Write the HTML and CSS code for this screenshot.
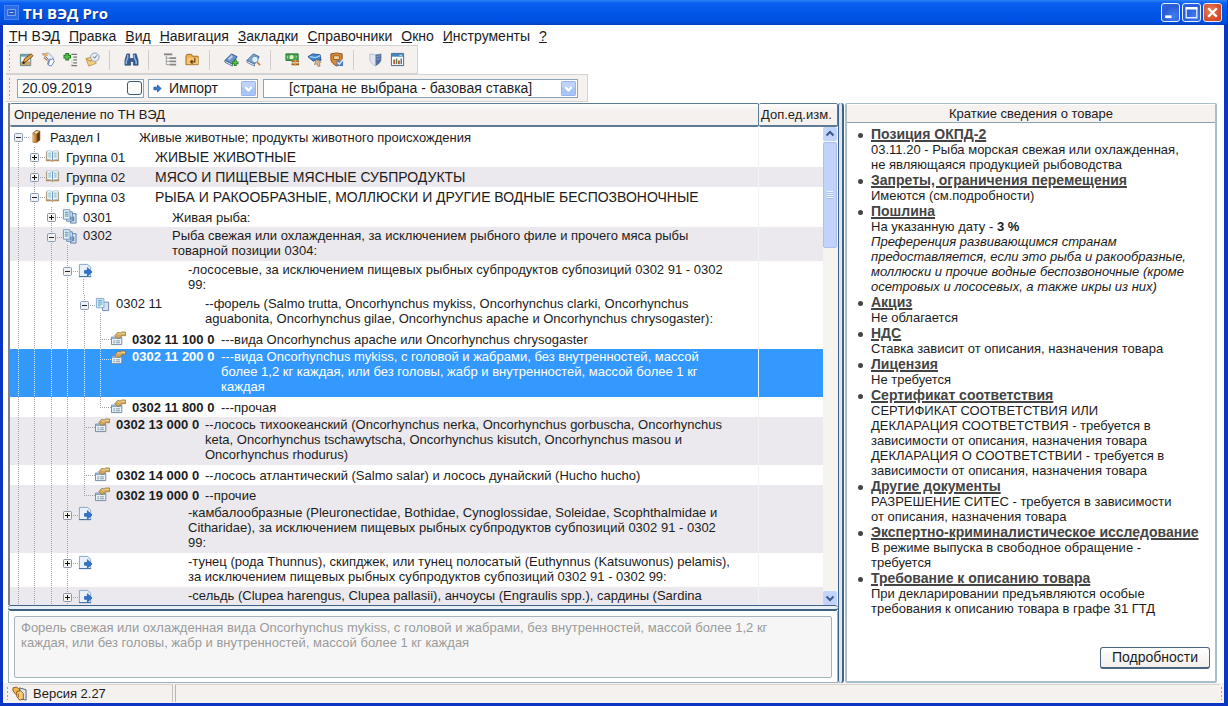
FILE: index.html
```html
<!DOCTYPE html>
<html lang="ru">
<head>
<meta charset="utf-8">
<title>ТН ВЭД Pro</title>
<link rel="stylesheet" href="styles.css">
</head>
<body>
<svg class="sprite" aria-hidden="true">
  <symbol id="plus" viewBox="0 0 9 9"><rect x=".5" y=".5" width="8" height="8" rx="1" fill="#f4f4f2" stroke="#8a94a4"/><path d="M2 4.500h5M4.500 2v5" stroke="#111"/></symbol>
  <symbol id="minus" viewBox="0 0 9 9"><rect x=".5" y=".5" width="8" height="8" rx="1" fill="#f0f0f0" stroke="#8a9bb4"/><path d="M2 4.500h5" stroke="#223"/></symbol>
  <symbol id="book" viewBox="0 0 16 16"><path d="M4 4l4-3 4 1v10l-4 3-4-1z" fill="#8a4f18"/><path d="M4 4l4 1v10l-4-1z" fill="#c98a3a"/><path d="M5 4l3-2 3 .6L8 5z" fill="#f3dfb4"/><path d="M9 5l2-1.500v8L9 13z" fill="#5e3410"/><path d="M5 6v7" stroke="#edc27c"/></symbol>
  <symbol id="open" viewBox="0 0 16 16"><path d="M1 3h14v10H9l-1 1-1-1H1z" fill="#b98a55"/><path d="M2 2c2-.6 4-.4 6 .8 2-1.200 4-1.400 6-.8v9.500c-2-.5-4-.3-6 .8-2-1.100-4-1.300-6-.8z" fill="#eef6fb" stroke="#8fb0c4" stroke-width=".6"/><path d="M8 3v9" stroke="#688ea8"/><path d="M3.500 4.500h3M3.500 6.500h3M3.500 8.500h3M9.500 4.500h3M9.500 6.500h3M9.500 8.500h3" stroke="#74b3cc"/></symbol>
  <symbol id="docs" viewBox="0 0 16 16"><path d="M9 5h6v10H9z" fill="#dbe6f6" stroke="#5577a8"/><path d="M5 3h6v10H5z" fill="#dce9f8" stroke="#5a7eae"/><path d="M1.500.8h7v10h-7z" fill="#eaf3fb" stroke="#6f93ba"/><path d="M3 3.500h4M3 5.500h4M3 7.500h4" stroke="#3d8fb0"/><path d="M12.500 8v5M9.500 8v4" stroke="#3a5d95"/></symbol>
  <symbol id="two" viewBox="0 0 16 16"><path d="M8 5.500h6.500v9H8z" fill="#d8e2f4" stroke="#6d84b4"/><path d="M1.500 1.500h8v10h-8z" fill="#e8f3fb" stroke="#86a5c5"/><path d="M3 3.500h5M3 5.500h5M3 7.500h5M3 9.500h3" stroke="#3e9cc4"/></symbol>
  <symbol id="link" viewBox="0 0 16 16"><path d="M1.500 1.500h9l3 3v10h-12z" fill="#e9f2fb" stroke="#7fa4c8"/><path d="M10.500 1.500v3h3z" fill="#bdd3ea"/><path d="M7 8h3V5l5 4.500L10 14v-3H7z" fill="#2d76cf" stroke="#1b4f9e" stroke-width=".7"/><path d="M1 14.500h13" stroke="#3f6ca3"/></symbol>
  <symbol id="card" viewBox="0 0 16 16"><path d="M.5 6.500h11v8H.5z" fill="#edf2f7" stroke="#70879c"/><path d="M1 7h10v1.500H1z" fill="#86a6c8"/><path d="M2.500 10.500h2M5.500 10.500h4M2.500 12.500h2M5.500 12.500h4" stroke="#7890a8"/><path d="M4 5l3-3.500 3 .5 1-1h4.500v4h-4L10 7 7.500 8 6 7z" fill="#d2a95c" stroke="#8a6930" stroke-width=".7"/><path d="M7 3l3 .5 1-1h4" stroke="#f1dca2" fill="none"/></symbol>
  <symbol id="chev" viewBox="0 0 16 16"><rect x=".5" y=".5" width="15" height="15" rx="1" fill="#a9c5f5" stroke="#8fb0e8"/><path d="M1 1h14v6H1z" fill="#bdd3fa"/><path d="M4.500 6.500L8 10l3.500-3.500" fill="none" stroke="#fff" stroke-width="2.400"/></symbol>
</svg>

<div class="window">
  <header class="title">
    <svg class="appicon" viewBox="0 0 16 16"><rect x=".5" y=".5" width="15" height="15" fill="#2b6ce8" stroke="#4d86ee"/><rect x="4" y="5" width="8" height="6" fill="#1b50c4" stroke="#8db4f7"/><path d="M6 8h4" stroke="#cfe0ff"/></svg>
    <h1>ТН ВЭД Pro</h1>
    <button class="win" aria-label="Свернуть"><svg viewBox="0 0 16 16"><path d="M3 12h6" stroke="#fff" stroke-width="2.600"/></svg></button>
    <button class="win" aria-label="Развернуть"><svg viewBox="0 0 16 16"><path d="M3 4h10v9H3z" fill="none" stroke="#dbe8ff" stroke-width="1.300"/><path d="M2.500 4h11" stroke="#fff" stroke-width="2.400"/></svg></button>
    <button class="win close" aria-label="Закрыть"><svg viewBox="0 0 16 16"><path d="M4 4l8 8M12 4l-8 8" stroke="#fff" stroke-width="2.200"/></svg></button>
  </header>

  <nav class="menu">
    <button><u>Т</u>Н ВЭД</button><button><u>П</u>равка</button><button><u>В</u>ид</button><button><u>Н</u>авигация</button><button><u>З</u>акладки</button><button><u>С</u>правочники</button><button><u>О</u>кно</button><button><u>И</u>нструменты</button><button><u>?</u></button>
  </nav>

  <div class="bar tools">
    <i class="grip"></i>
    <button aria-label="Изменить"><svg viewBox="0 0 16 16"><path d="M1.500 2.500h11v12h-11z" fill="#e9f4f4" stroke="#56808c"/><path d="M2 3h10v2H2z" fill="#69a5a8"/><path d="M2 10h10v4H2z" fill="#d0a367"/><path d="M4 12L6 7l7-5 2 2-7 6z" fill="#e6a640" stroke="#71441b"/><path d="M4 12l2-1" stroke="#222" stroke-width="2"/></svg></button>
    <button aria-label="Связи"><svg viewBox="0 0 16 16"><path d="M1 2l7-1 5 5-3 8-3-1 1-5z" fill="#e9eef8" stroke="#8ca1c5"/><path d="M3 3l5 5M10 7l-3 6" stroke="#58759f"/><path d="M2 2l4-1 2 3-4 1z" fill="#e9b263"/><path d="M9 9l4-2 1 3-3 5-3-1z" fill="#fff" stroke="#6987b6"/><path d="M3 6l4 3" stroke="#cf8450" stroke-width="1.500"/></svg></button>
    <button aria-label="Добавить"><svg viewBox="0 0 16 16"><path d="M4.500 1v8M.5 5h8" stroke="#1d7922" stroke-width="4"/><path d="M4.500 2v6M1.500 5h6" stroke="#58bd4c" stroke-width="2"/><path d="M9 2.500h6M11 5.500h4M11 8.500h4M11 11.500h4M9 14.500h6" stroke="#777" stroke-width="1.300"/><path d="M9.500 9v5" stroke="#aaa" stroke-dasharray="1 1"/></svg></button>
    <button aria-label="История"><svg viewBox="0 0 16 16"><path d="M1 7l7-2 4 7-8 3z" fill="#f0ce82" stroke="#c69a4d"/><path d="M1 7l5 3 3-4" fill="none" stroke="#b7893e"/><circle cx="10.500" cy="5.500" r="4.500" fill="#e7edf4" stroke="#8e9db2"/><path d="M8.500 5l2 1.500 2-3" fill="none" stroke="#57708d"/></svg></button>
    <i class="sep"></i>
    <button class="far" aria-label="Найти"><svg viewBox="0 0 16 16"><path d="M3 2h3v4l1 1h2l1-1V2h3l2 7v5h-5v-4H7v4H1V9z" fill="#375c8f" stroke="#243f69" stroke-width=".7"/><path d="M4 3v3L2.500 10v3M11 3v3l2 4v3" stroke="#8fb7e6" stroke-width="1.500" fill="none"/></svg></button>
    <i class="sep"></i>
    <button class="far" aria-label="Дерево"><svg viewBox="0 0 16 16"><path d="M1 2.500h9" stroke="#888" stroke-width="2"/><path d="M3.500 4v9.500H7M3.500 6.500H7M3.500 10H7" fill="none" stroke="#999"/><path d="M7 6.500h7M7 10h7M7 13.500h7" stroke="#888" stroke-width="2"/></svg></button>
    <button aria-label="Папка"><svg viewBox="0 0 16 16"><path d="M1 4.500l1-2h5l1 2h6v9H1z" fill="#e8ae50" stroke="#a36a25"/><path d="M2 6h12v7H2z" fill="#f3c673"/><path d="M10.500 6v4.500H6M8 8.500l-2 2 2 2" fill="none" stroke="#704018" stroke-width="1.300"/></svg></button>
    <i class="sep"></i>
    <button class="far" aria-label="Добавить закладку"><svg viewBox="0 0 16 16"><path d="M1 9l7-7 6 3-5 8z" fill="#6a90cc" stroke="#395984"/><path d="M1 9l8 4v2l-8-4z" fill="#e6edf5" stroke="#395984" stroke-width=".8"/><path d="M5 8l4-4" stroke="#b8d0f0" stroke-width="2"/><path d="M12 8v7M8.500 11.500h7" stroke="#258325" stroke-width="3"/><path d="M12 9v5M9.500 11.500h5" stroke="#76cc62"/></svg></button>
    <button aria-label="Найти закладку"><svg viewBox="0 0 16 16"><path d="M1 9l7-7 6 3-5 8z" fill="#7aa2d8" stroke="#47698f"/><path d="M1 9l8 4v2l-8-4z" fill="#eef3f8" stroke="#47698f" stroke-width=".8"/><circle cx="9.500" cy="8" r="3.500" fill="#dcefff" stroke="#658ab0"/><path d="M12 11l3 3" stroke="#c88434" stroke-width="2"/></svg></button>
    <i class="sep"></i>
    <button class="far" aria-label="Платежи"><svg viewBox="0 0 16 16"><path d="M1 2h13v7H1z" fill="#49a354" stroke="#20732d"/><circle cx="7" cy="5.500" r="2.200" fill="#dff4cc"/><path d="M2.500 4v3M12 4v2" stroke="#b9e6ad"/><path d="M7 10h8M7 13h8" stroke="#96531b" stroke-width="2"/><path d="M8 9.500h6M8 12.500h6M11 8v7" stroke="#e4aa48"/></svg></button>
    <button aria-label="Особенности"><svg viewBox="0 0 16 16"><path d="M1 5l5-3 8 1 1 6-5-1-3 2z" fill="#3f82cc" stroke="#255891"/><path d="M3 5l6 1 5-2" stroke="#9bd0fa" stroke-width="1.500" fill="none"/><path d="M10 8l5 3-2 1 1 3-2 .5-2-3-2 1z" fill="#d9b692" stroke="#8c7063" stroke-width=".7"/></svg></button>
    <button aria-label="Сертификаты"><svg viewBox="0 0 16 16"><path d="M2 2l6-1 6 1v6c0 3-3 5-6 7-3-2-6-4-6-7z" fill="#d78937" stroke="#8d4b17"/><path d="M5 4h6v4H5z" fill="#f5d798" stroke="#9d5c26"/><path d="M8 9h7v6H8z" fill="#527db5"/><path d="M9 11l2 2 4-5" stroke="#d6edff" stroke-width="1.500" fill="none"/></svg></button>
    <i class="sep"></i>
    <button class="far" aria-label="Защита"><svg viewBox="0 0 16 16"><path d="M2 2l6 1 6-1v6c0 3-3 5-6 7-3-2-6-4-6-7z" fill="#dfe6f2" stroke="#aab4c4" stroke-width=".8"/><path d="M8 3l6-1v6c0 3-3 5-6 7z" fill="#53709e"/><path d="M9 5l4-1M9 8l4-1" stroke="#8ea6c8"/></svg></button>
    <button aria-label="Отчёт"><svg viewBox="0 0 16 16"><path d="M1.500 1.500h13v13h-13z" fill="#fff" stroke="#3c638d"/><path d="M2 2h12v3H2z" fill="#4684bd"/><path d="M10 3.500h3" stroke="#d4ecff"/><path d="M4.500 13V8M9.500 13V9" stroke="#bf562e" stroke-width="2"/><path d="M7 13V7" stroke="#3c8b57" stroke-width="1.500"/><path d="M12 13V7" stroke="#426fb0" stroke-width="1.500"/></svg></button>
  </div>

  <div class="bar filters">
    <i class="grip"></i>
    <div class="field date"><input type="text" value="20.09.2019" aria-label="Дата"><input type="checkbox" aria-label="Использовать дату"></div>
    <div class="field mode">
      <svg class="arrow" viewBox="0 0 10 10"><path d="M1 3.500h4V1l4 4-4 4V6.500H1z" fill="#3579cf" stroke="#174b94" stroke-width=".8"/></svg>
      <select aria-label="Режим"><option>Импорт</option></select><svg class="drop"><use href="#chev"/></svg>
    </div>
    <div class="field country"><select aria-label="Страна"><option>[страна не выбрана - базовая ставка]</option></select><svg class="drop"><use href="#chev"/></svg></div>
  </div>

  <main class="work">
    <div class="left">
      <div class="treebox">
        <table class="tree">
          <thead><tr><th>Определение по ТН ВЭД</th><th class="unit">Доп.ед.изм.</th></tr></thead>
          <tbody>
            <tr><td><div class="row"><span class="node first"><svg><use href="#minus"/></svg></span><span class="pic"><svg><use href="#book"/></svg></span><span class="code">Раздел I</span><span>Живые животные; продукты животного происхождения</span></div></td><td></td></tr>
            <tr><td><div class="row"><i></i><span class="node"><svg><use href="#plus"/></svg></span><span class="pic"><svg><use href="#open"/></svg></span><span class="code">Группа 01</span><span class="caps">ЖИВЫЕ ЖИВОТНЫЕ</span></div></td><td></td></tr>
            <tr class="alt"><td><div class="row"><i></i><span class="node"><svg><use href="#plus"/></svg></span><span class="pic"><svg><use href="#open"/></svg></span><span class="code">Группа 02</span><span class="caps">МЯСО И ПИЩЕВЫЕ МЯСНЫЕ СУБПРОДУКТЫ</span></div></td><td></td></tr>
            <tr><td><div class="row"><i></i><span class="node"><svg><use href="#minus"/></svg></span><span class="pic"><svg><use href="#open"/></svg></span><span class="code">Группа 03</span><span class="caps">РЫБА И РАКООБРАЗНЫЕ, МОЛЛЮСКИ И ДРУГИЕ ВОДНЫЕ БЕСПОЗВОНОЧНЫЕ</span></div></td><td></td></tr>
            <tr><td><div class="row"><i></i><i></i><span class="node"><svg><use href="#plus"/></svg></span><span class="pic"><svg><use href="#docs"/></svg></span><span class="code">0301</span><span>Живая рыба:</span></div></td><td></td></tr>
            <tr class="alt"><td><div class="row two"><i></i><i></i><span class="node"><svg><use href="#minus"/></svg></span><span class="pic stem"><svg><use href="#docs"/></svg></span><span class="code">0302</span><span>Рыба свежая или охлажденная, за исключением рыбного филе и прочего мяса рыбы<br>товарной позиции 0304:</span></div></td><td></td></tr>
            <tr><td><div class="row two"><i></i><i></i><i></i><span class="node"><svg><use href="#minus"/></svg></span><span class="pic stem"><svg><use href="#link"/></svg></span><span class="code"></span><span>-лососевые, за исключением пищевых рыбных субпродуктов субпозиций 0302 91 - 0302<br>99:</span></div></td><td></td></tr>
            <tr><td><div class="row two"><i></i><i></i><i></i><i></i><span class="node"><svg><use href="#minus"/></svg></span><span class="pic stem"><svg><use href="#two"/></svg></span><span class="code">0302 11</span><span>--форель (Salmo trutta, Oncorhynchus mykiss, Oncorhynchus clarki, Oncorhynchus<br>aguabonita, Oncorhynchus gilae, Oncorhynchus apache и Oncorhynchus chrysogaster):</span></div></td><td></td></tr>
            <tr><td><div class="row"><i></i><i></i><i></i><i></i><i></i><span class="node"></span><span class="pic"><svg><use href="#card"/></svg></span><b class="code">0302 11 100 0</b><span>---вида Oncorhynchus apache или Oncorhynchus chrysogaster</span></div></td><td></td></tr>
            <tr class="sel"><td><div class="row three"><i></i><i></i><i></i><i></i><i></i><span class="node"></span><span class="pic"><svg><use href="#card"/></svg></span><b class="code">0302 11 200 0</b><span>---вида Oncorhynchus mykiss, с головой и жабрами, без внутренностей, массой<br>более 1,2 кг каждая, или без головы, жабр и внутренностей, массой более 1 кг<br>каждая</span></div></td><td></td></tr>
            <tr><td><div class="row"><i></i><i></i><i></i><i></i><i></i><span class="node last"></span><span class="pic"><svg><use href="#card"/></svg></span><b class="code">0302 11 800 0</b><span>---прочая</span></div></td><td></td></tr>
            <tr class="alt"><td><div class="row three"><i></i><i></i><i></i><i></i><span class="node"></span><span class="pic"><svg><use href="#card"/></svg></span><b class="code">0302 13 000 0</b><span>--лосось тихоокеанский (Oncorhynchus nerka, Oncorhynchus gorbuscha, Oncorhynchus<br>keta, Oncorhynchus tschawytscha, Oncorhynchus kisutch, Oncorhynchus masou и<br>Oncorhynchus rhodurus)</span></div></td><td></td></tr>
            <tr><td><div class="row"><i></i><i></i><i></i><i></i><span class="node"></span><span class="pic"><svg><use href="#card"/></svg></span><b class="code">0302 14 000 0</b><span>--лосось атлантический (Salmo salar) и лосось дунайский (Hucho hucho)</span></div></td><td></td></tr>
            <tr class="alt"><td><div class="row"><i></i><i></i><i></i><i></i><span class="node last"></span><span class="pic"><svg><use href="#card"/></svg></span><b class="code">0302 19 000 0</b><span>--прочие</span></div></td><td></td></tr>
            <tr class="alt"><td><div class="row three"><i></i><i></i><i></i><span class="node"><svg><use href="#plus"/></svg></span><span class="pic"><svg><use href="#link"/></svg></span><span class="code"></span><span>-камбалообразные (Pleuronectidae, Bothidae, Cynoglossidae, Soleidae, Scophthalmidae и<br>Citharidae), за исключением пищевых рыбных субпродуктов субпозиций 0302 91 - 0302<br>99:</span></div></td><td></td></tr>
            <tr><td><div class="row two"><i></i><i></i><i></i><span class="node"><svg><use href="#plus"/></svg></span><span class="pic"><svg><use href="#link"/></svg></span><span class="code"></span><span>-тунец (рода Thunnus), скипджек, или тунец полосатый (Euthynnus (Katsuwonus) pelamis),<br>за исключением пищевых рыбных субпродуктов субпозиций 0302 91 - 0302 99:</span></div></td><td></td></tr>
            <tr class="alt"><td><div class="row two"><i></i><i></i><i></i><span class="node"><svg><use href="#plus"/></svg></span><span class="pic"><svg><use href="#link"/></svg></span><span class="code"></span><span>-сельдь (Clupea harengus, Clupea pallasii), анчоусы (Engraulis spp.), сардины (Sardina</span></div></td><td></td></tr>
          </tbody>
        </table>
        <div class="scroll">
          <button aria-label="Вверх"><svg viewBox="0 0 14 14"><path d="M3.500 8.500L7 5l3.500 3.500" fill="none" stroke="#3c5a8c" stroke-width="2"/></svg></button>
          <div class="thumb"></div>
          <button class="down" aria-label="Вниз"><svg viewBox="0 0 14 14"><path d="M3.500 5.500L7 9l3.500-3.500" fill="none" stroke="#3c5a8c" stroke-width="2"/></svg></button>
        </div>
      </div>
      <div class="hsplit"></div>
      <div class="note"><textarea readonly aria-label="Описание">Форель свежая или охлажденная вида Oncorhynchus mykiss, с головой и жабрами, без внутренностей, массой более 1,2 кг каждая, или без головы, жабр и внутренностей, массой более 1 кг каждая</textarea></div>
    </div>
    <div class="vsplit"></div>
    <aside class="info">
      <h2>Краткие сведения о товаре</h2>
      <ul>
        <li><a href="#">Позиция ОКПД-2</a><p>03.11.20 - Рыба морская свежая или охлажденная,<br>не являющаяся продукцией рыбоводства</p></li>
        <li><a href="#">Запреты, ограничения перемещения</a><p>Имеются (см.подробности)</p></li>
        <li><a href="#">Пошлина</a><p>На указанную дату - <b>3 %</b><br><em>Преференция развивающимся странам<br>предоставляется, если это рыба и ракообразные,<br>моллюски и прочие водные беспозвоночные (кроме<br>осетровых и лососевых, а также икры из них)</em></p></li>
        <li><a href="#">Акциз</a><p>Не облагается</p></li>
        <li><a href="#">НДС</a><p>Ставка зависит от описания, назначения товара</p></li>
        <li><a href="#">Лицензия</a><p>Не требуется</p></li>
        <li><a href="#">Сертификат соответствия</a><p>СЕРТИФИКАТ СООТВЕТСТВИЯ ИЛИ<br>ДЕКЛАРАЦИЯ СООТВЕТСТВИЯ - требуется в<br>зависимости от описания, назначения товара<br>ДЕКЛАРАЦИЯ О СООТВЕТСТВИИ - требуется в<br>зависимости от описания, назначения товара</p></li>
        <li><a href="#">Другие документы</a><p>РАЗРЕШЕНИЕ СИТЕС - требуется в зависимости<br>от описания, назначения товара</p></li>
        <li><a href="#">Экспертно-криминалистическое исследование</a><p>В режиме выпуска в свободное обращение -<br>требуется</p></li>
        <li><a href="#">Требование к описанию товара</a><p>При декларировании предъявляются особые<br>требования к описанию товара в графе 31 ГТД</p></li>
      </ul>
      <div class="foot"><button>Подробности</button></div>
    </aside>
  </main>

  <footer class="status">
    <i class="grip"></i>
    <div class="ver"><svg viewBox="0 0 16 16"><path d="M8 2l7 2v11l-5-1z" fill="#dfe7ee" stroke="#4b5f78"/><path d="M1 2l4-1 3 3v6l-4-1-3-4z" fill="#f0b84c" stroke="#8f5815"/><path d="M5 6l4-1 3 3v6l-4 1-3-4z" fill="#f6cf7c" stroke="#8f5815"/><path d="M7 8v4" stroke="#a4651b"/></svg>Версия 2.27</div>
    <div class="rest"></div>
    <i class="grip"></i>
  </footer>
</div>
</body>
</html>
```
FILE: styles.css
```css
* { box-sizing: border-box; }
body { margin: 0; font: 13px/15px "Liberation Sans", Arial, sans-serif; color: #1c1c1c; background: #fff; }
button, input, select, textarea { font: inherit; color: inherit; margin: 0; padding: 0; border: 0; background: none; border-radius: 0; }
svg { display: block; flex: none; }
.sprite { display: none; }

.window { height: 100vh; min-height: 480px; display: flex; flex-direction: column; border: solid #0c35c4; border-width: 0 4px 3px 3px; background: #fff; }
.title { display: flex; align-items: center; gap: 2px; height: 25px; margin: 0 -3px; padding: 0 5px 0 4px; background: linear-gradient(#2f83f5, #0a5ff0 12%, #0054e6 60%, #0050e0 88%, #0340bd); }
.title h1 { flex: 1; margin: 0 0 0 2px; font: bold 15px/20px "Open Sans", sans-serif; color: #fff; text-shadow: 1px 1px 1px #07308f; }
.appicon { width: 15px; height: 15px; }
.win { width: 19px; height: 19px; border: 1px solid #e6efff; border-radius: 3px; background: radial-gradient(circle at 70% 70%, #3f7cf2, #2a5bd8 60%, #3566dd); }
.win svg { width: 17px; height: 17px; }
.win.close { background: radial-gradient(circle at 40% 40%, #ea8160, #d9502c 60%, #c33c18); }

.menu { display: flex; flex: none; gap: 9px; height: 20px; padding: 3px 6px 0; font-size: 14px; }
.menu button { line-height: 15px; height: 16px; white-space: nowrap; }

.bar { display: flex; flex: none; align-items: center; align-self: flex-start; margin-left: 3px; background: #f4f1ef; border: 1px solid #d5d3d2; border-left: 0; }
.grip { flex: none; width: 3px; height: 22px; margin: 0 2px; background: radial-gradient(circle, #a9a39c 1px, transparent 1px) 0 0 / 3px 4px; }
.tools { height: 29px; padding-right: 12px; }
.tools button { width: 16px; height: 16px; margin-left: 6px; }
.tools button:nth-child(2) { margin-left: 5px; }
.tools button svg { width: 15px; height: 15px; margin: auto; }
.tools .sep { width: 1px; height: 20px; margin-left: 9px; background: #cfccc9; }
.tools button.far { margin-left: 13px; }
.filters { height: 28px; padding-right: 9px; font-size: 14px; }
.field { display: flex; align-items: center; height: 19px; border: 1px solid #8ba5b8; background: #fff; }
.date { width: 127px; margin-left: 4px; padding: 0 1px 0 4px; }
.date input[type=text] { flex: 1; min-width: 0; }
.date input[type=checkbox] { appearance: none; width: 15px; height: 14px; border: 1px solid #3d5878; border-radius: 3px; background: #fbfbfa; }
.mode { width: 110px; margin-left: 4px; padding: 0 1px 0 4px; }
.arrow { width: 9px; height: 9px; margin-right: 7px; }
.field select { flex: 1; min-width: 0; appearance: none; }
.drop { width: 15px; height: 15px; pointer-events: none; }
.country { width: 315px; margin-left: 5px; padding: 0 1px 0 25px; }

.work { flex: 1; min-height: 0; display: flex; padding: 1px 7px 0 5px; }
.left { flex: 1; min-width: 0; display: flex; flex-direction: column; }
.treebox { position: relative; flex: 1; min-height: 0; overflow: hidden; border-left: 2px solid #7e828c; }
.tree { width: 100%; border-collapse: separate; border-spacing: 0; table-layout: fixed; }
.tree th { height: 24px; padding: 0 0 0 4px; text-align: left; font-weight: normal; white-space: nowrap; background: linear-gradient(#fff, #f5f1ee 30%); border: solid #5d7b92; border-width: 1px 1px 2px 0; border-radius: 2px; overflow: hidden; }
.tree th.unit { width: 79px; padding-left: 2px; }
.tree td { padding: 0; vertical-align: top; }
.tree td:first-child { border-right: 1px solid #f4f3f4; }
.alt { background: #ebe9ed; }
.sel { color: #fff; background: #3399ff; }
.row { display: flex; height: 20px; padding-top: 3px; white-space: nowrap; }
.row.two { height: 34px; padding-top: 1px; }
.row.three { height: 48px; padding-top: 0; }
.caps { font-size: 14px; }
.row > i, .node { flex: none; width: 16px; margin-top: -3px; background: repeating-linear-gradient(#a2a2a6 0 1px, transparent 1px 2px) 8px 0 / 1px 100% no-repeat; }
.row > :nth-child(even) { width: 17px; }
.row .node { position: relative; width: 17px; }
.row.two > i, .two .node { margin-top: -1px; }
.row.three > i, .three .node { margin-top: 0; }
.node::after { content: ""; position: absolute; left: 8px; top: 10px; width: 11px; height: 1px; background: repeating-linear-gradient(90deg, #a2a2a6 0 1px, transparent 1px 2px); }
.node svg { position: absolute; z-index: 1; left: 4px; top: 6px; width: 9px; height: 9px; }
.row .node.first { background-position: 8px 10px; }
.row .node.last { background-size: 1px 10px; }
.sel .row > i, .sel .node { background-image: repeating-linear-gradient(#d6ebff 0 1px, transparent 1px 2px); }
.sel .node::after { background: repeating-linear-gradient(90deg, #d6ebff 0 1px, transparent 1px 2px); }
.row .pic { flex: none; width: 23px; padding-left: 2px; }
.pic svg { width: 15px; height: 15px; margin-top: -1px; }
.two .pic svg, .three .pic svg { margin-top: 1px; }
.stem { background: repeating-linear-gradient(#a2a2a6 0 1px, transparent 1px 2px) 7px 17px / 1px 100% no-repeat; }
.row .code { flex: none; width: 89px; }
.scroll { position: absolute; right: 0; top: 24px; bottom: 0; width: 15px; display: flex; flex-direction: column; background: #f6f4f0; }
.scroll button { width: 14px; height: 14px; border-radius: 2px; background: #c3d4fb; }
.scroll .down { margin-top: auto; }
.thumb { height: 20%; min-height: 106px; margin: 1px 1px 0 0; border: 1px solid #a9c0f0; border-radius: 2px; background: repeating-linear-gradient(#eef4ff 0 1px, #a9c2f4 1px 2px) center / 6px 8px no-repeat, #c1d3fb; }
.hsplit { flex: none; height: 6px; border: solid #3e6285; border-width: 1px 0 2px; border-radius: 3px; background: #e8f0f6; }
.note { flex: none; height: 72px; padding: 5px 5px 4px; border: 1px solid #9fb0bd; border-top: 0; }
.note textarea { display: block; width: 100%; height: 100%; padding: 3px 32px 3px 6px; resize: none; border: 1px solid #a3b4be; border-radius: 2px; background: #f6f6f6; color: #9b9b9b; overflow: hidden; }
.vsplit { flex: none; width: 6px; margin: 0 1px 0 0; border: solid #3e6285; border-width: 0 2px 0 1px; border-radius: 3px; background: #dde9f2; }
.info { flex: none; width: 372px; display: flex; flex-direction: column; border: 2px solid #a9bfca; border-top-width: 1px; border-radius: 2px; background: #fff; }
.info h2 { margin: 0; font: inherit; line-height: 17px; text-align: center; background: #f6f2f0; border-bottom: 1px solid #8da3b0; border-top: 1px solid #fff; }
.info ul { flex: 1; margin: 0; padding: 3px 0 0 24px; list-style: none; white-space: nowrap; }
.info li { position: relative; }
.info li::before { content: ""; position: absolute; left: -13px; top: 7px; width: 5px; height: 5px; border-radius: 50%; background: #444; }
.info a { display: block; width: max-content; color: #444; font-size: 14px; font-weight: bold; line-height: 16px; text-decoration: underline; text-decoration-thickness: 2px; }
.info p { margin: 0; }
.foot { flex: none; display: flex; justify-content: flex-end; padding: 3px 5px 12px; }
.foot button { width: 110px; height: 22px; border: 1px solid #4a6580; border-bottom-width: 2px; border-radius: 3px; background: linear-gradient(#fff, #f2eeec); font-size: 14px; }

.status { flex: none; display: flex; align-items: center; height: 20px; padding: 0 0 0 2px; background: #f4f1ef; }
.status .grip { height: 14px; margin: 0 1px; }
.ver { display: flex; align-items: center; gap: 6px; width: 163px; height: 18px; padding-left: 2px; border-right: 1px solid #c4c0bd; border-top: 1px solid #d8d4d0; }
.ver svg { width: 15px; height: 15px; }
.rest { flex: 1; height: 18px; margin-left: 2px; border-left: 1px solid #b9b5b2; border-top: 1px solid #d8d4d0; }
```
